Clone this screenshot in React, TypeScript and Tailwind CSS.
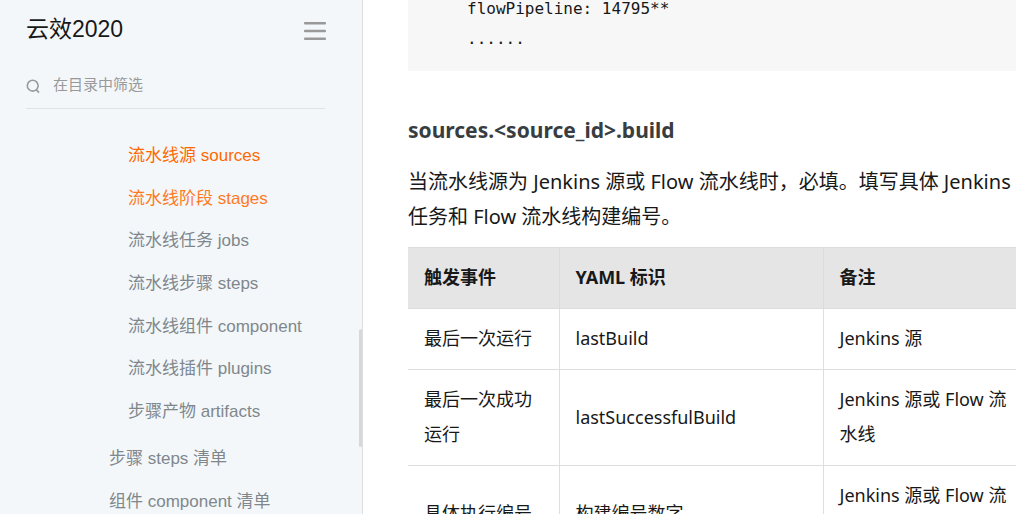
type NavItem = { label: string; tone: string };

const childItems: NavItem[] = [
  { label: "流水线源 sources", tone: "text-[#ff6a00]" },
  { label: "流水线阶段 stages", tone: "text-[#ff7a1f]" },
  { label: "流水线任务 jobs", tone: "text-[#80878c]" },
  { label: "流水线步骤 steps", tone: "text-[#80878c]" },
  { label: "流水线组件 component", tone: "text-[#80878c]" },
  { label: "流水线插件 plugins", tone: "text-[#80878c]" },
  { label: "步骤产物 artifacts", tone: "text-[#80878c]" },
];

const siblingItems: NavItem[] = [
  { label: "步骤 steps 清单", tone: "text-[#80878c]" },
  { label: "组件 component 清单", tone: "text-[#80878c]" },
];

const rows = [
  ["最后一次运行", "lastBuild", "Jenkins 源"],
  ["最后一次成功运行", "lastSuccessfulBuild", "Jenkins 源或 Flow 流水线"],
  ["具体执行编号", "构建编号数字", "Jenkins 源或 Flow 流水线"],
];

function NavLink({ label, tone }: NavItem) {
  return (
    <li className="flex items-center">
      <a href="#" className={`whitespace-nowrap ${tone}`}>
        {label}
      </a>
    </li>
  );
}

function Sidebar() {
  return (
    <aside className="relative w-[363px] shrink-0 overflow-hidden border-r border-[#dcdfe1] bg-[#f3f7fa] font-['Liberation_Sans','Noto_Sans_CJK_SC',sans-serif]">
      <div className="pr-9 pl-[26px]">
        <header className="flex h-[58px] items-center justify-between">
          <h1 className="text-[23px] leading-[58px] text-[#181818]">云效2020</h1>
          <button type="button" aria-label="目录" className="pt-1">
            <svg width="22" height="18" viewBox="0 0 22 18" fill="#999999">
              <rect y="0" width="22" height="2.4" rx="1" />
              <rect y="7.8" width="22" height="2.4" rx="1" />
              <rect y="15.6" width="22" height="2.4" rx="1" />
            </svg>
          </button>
        </header>
        <label className="mr-px flex h-[51px] items-center border-b border-[#dfe3e6] pt-1">
          <svg width="15" height="15" viewBox="0 0 15 15" fill="none" stroke="#999999" strokeWidth="1.6" className="mt-[3px] shrink-0">
            <circle cx="6.7" cy="6.7" r="5.4" />
            <path d="M10.2 10.6 13 13.6" />
          </svg>
          <input
            type="text"
            aria-label="在目录中筛选"
            placeholder="在目录中筛选"
            className="ml-3 min-w-0 flex-1 bg-transparent text-[15px] outline-none placeholder:text-[#999999]"
          />
        </label>
      </div>
      <nav className="pt-[26px] text-[17px] leading-6">
        <ul className="grid min-h-[298px] auto-rows-fr pl-32">
          {childItems.map((item) => (
            <NavLink key={item.label} {...item} />
          ))}
        </ul>
        <ul className="grid min-h-[90px] auto-rows-fr pt-1 pl-[109px]">
          {siblingItems.map((item) => (
            <NavLink key={item.label} {...item} />
          ))}
        </ul>
      </nav>
      <div className="absolute top-[329px] right-0 h-[118px] w-[3px] rounded-sm bg-[#d8d8d8]" />
    </aside>
  );
}

export default function App() {
  return (
    <div className="flex h-screen overflow-hidden bg-white text-[#181818]">
      <Sidebar />
      <main className="min-w-0 flex-1 overflow-hidden pl-[45px] font-['Noto_Sans','Noto_Sans_CJK_SC',sans-serif]">
        <article className="-mr-4">
          <pre className="bg-[#f7f7f7] pb-[17px] pl-[59px] text-[16px] leading-[30px]">
            <code className="-mt-[6px] block font-['DejaVu_Sans_Mono',monospace]">
              {"flowPipeline: 14795**\n......"}
            </code>
          </pre>
          <h3 className="mt-11 text-[21px] leading-[30px] font-bold text-[#373d41]">
            sources.&lt;source_id&gt;.build
          </h3>
          <p className="mt-[19px] text-[20px] leading-[35px]">
            当流水线源为 Jenkins 源或 Flow 流水线时，必填。填写具体 Jenkins 任务和 Flow 流水线构建编号。
          </p>
          <table className="mt-[13px] w-full table-fixed border-collapse text-left text-[18px] leading-[35px]">
            <colgroup>
              <col className="w-[151px]" />
              <col className="w-[264px]" />
              <col />
            </colgroup>
            <thead className="bg-[#e5e5e5]">
              <tr className="border-y border-[#dcdcdc]">
                {["触发事件", "YAML 标识", "备注"].map((head) => (
                  <th key={head} className="border-r border-[#dcdcdc] px-4 pt-3 pb-[13px] font-bold">
                    {head}
                  </th>
                ))}
              </tr>
            </thead>
            <tbody>
              {rows.map((row) => (
                <tr key={row[0]} className="border-b border-[#dedede]">
                  {row.map((cell) => (
                    <td key={cell} className="border-r border-[#dedede] px-4 pt-3 pb-[13px] align-middle">
                      {cell}
                    </td>
                  ))}
                </tr>
              ))}
            </tbody>
          </table>
        </article>
      </main>
    </div>
  );
}
